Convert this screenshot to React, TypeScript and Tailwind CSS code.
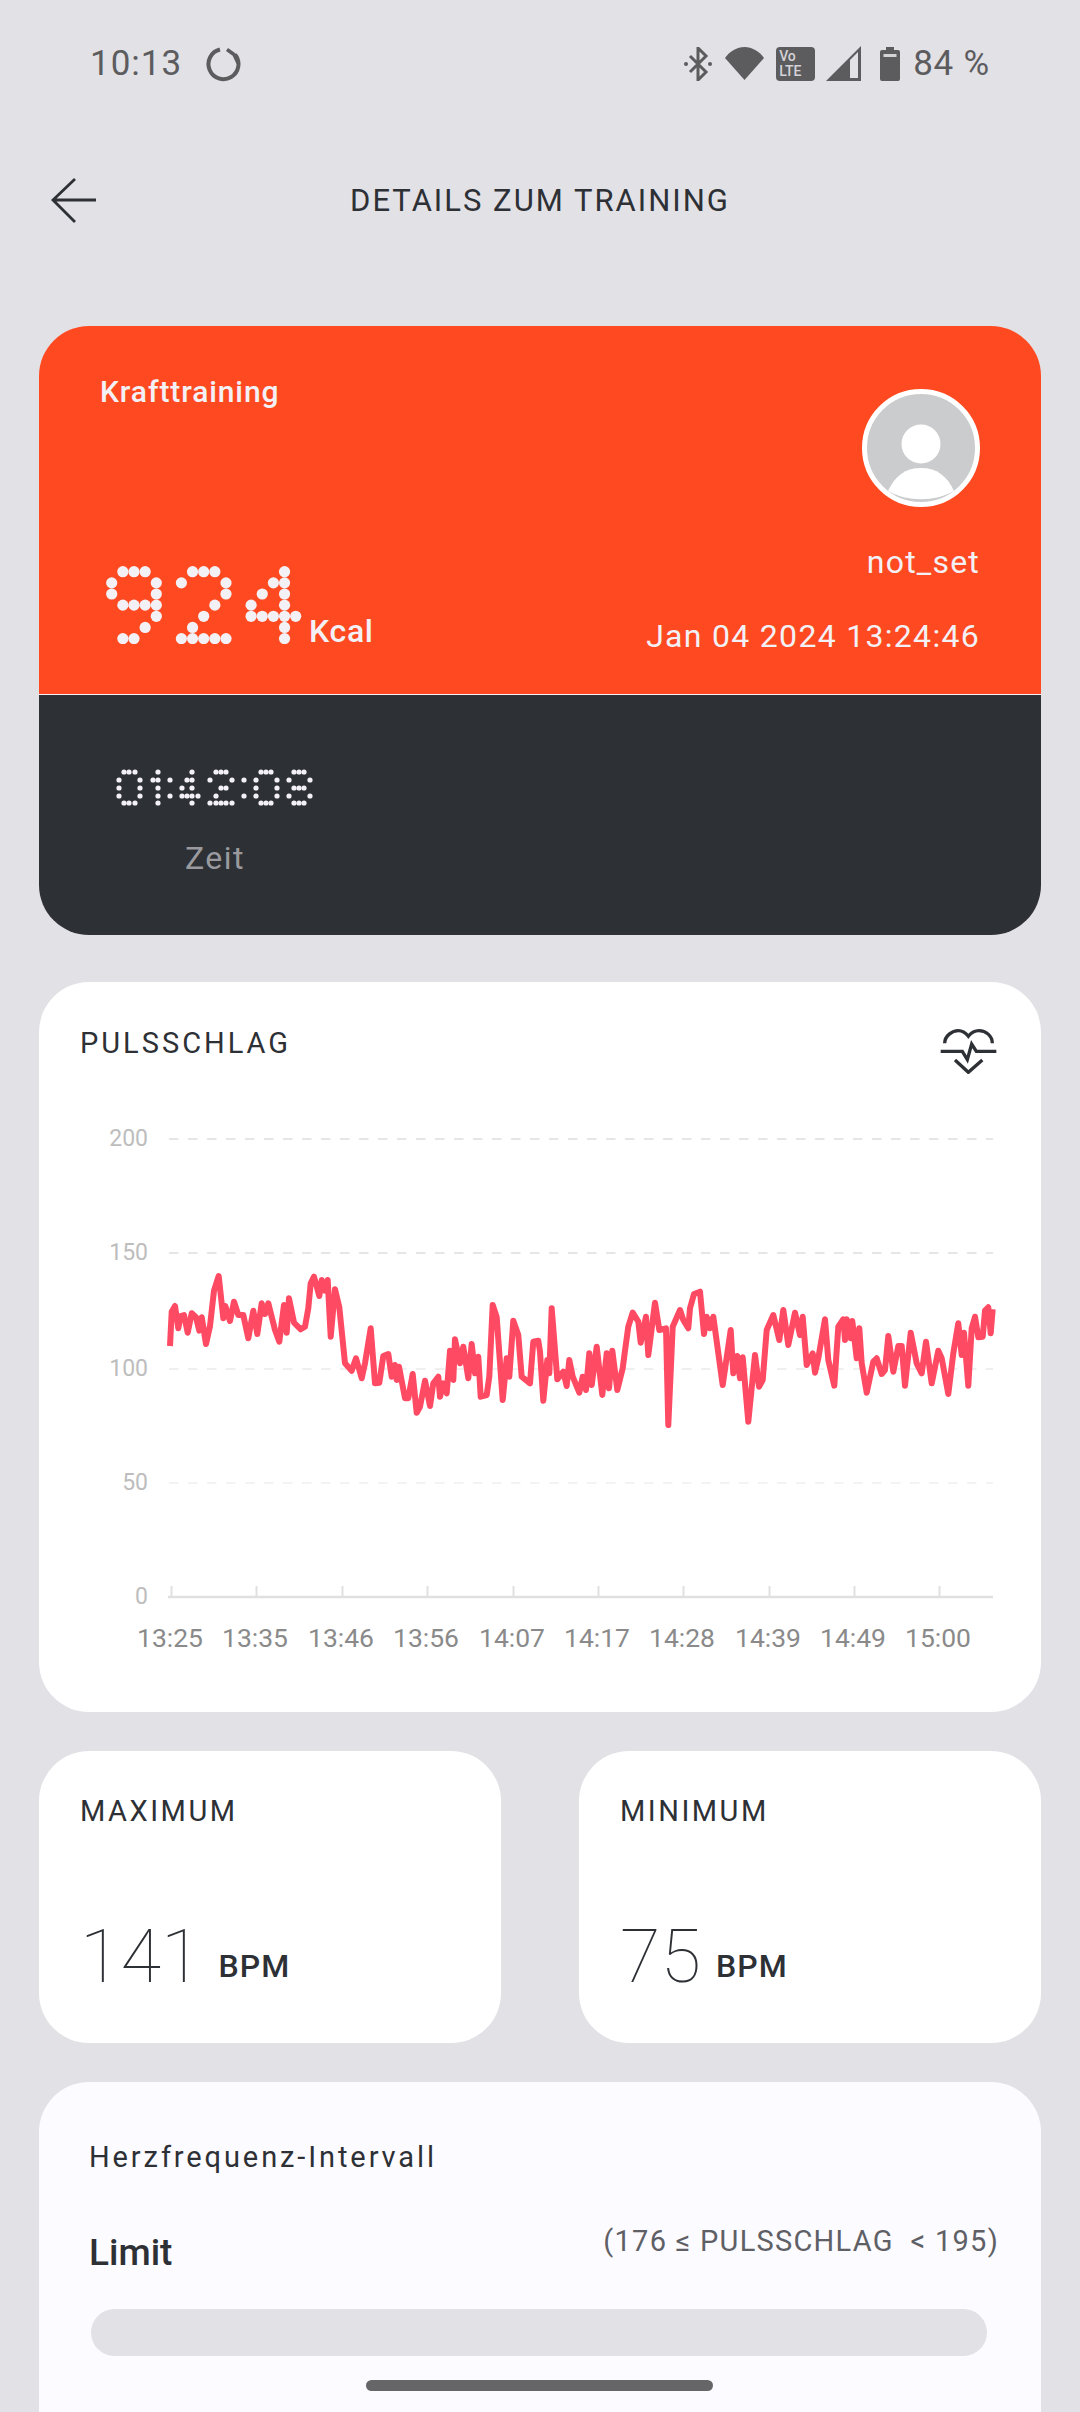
const DIGITS_924: Record<string, string[]> = {
  '9': ['.###.', '#...#', '#...#', '.####', '....#', '...#.', '.##..'],
  '2': ['.###.', '#...#', '....#', '...#.', '..#..', '.#...', '#####'],
  '4': ['...#.', '..##.', '.#.#.', '#..#.', '#####', '...#.', '...#.'],
};

// dots of 01:42:08, traced from the picture, in px from the left of the row
const TIME_DOTS: [number, number][] = [
  [5, 0], [10, 0], [16, 0], [0, 8], [21, 8], [0, 16], [21, 16], [0, 24], [21, 24], [5, 31], [10, 31], [16, 31],
  [39, 0], [34, 8], [39, 8], [39, 16], [39, 24], [39, 31],
  [51, 8], [51, 24],
  [73, 0], [68, 8], [73, 8], [63, 16], [73, 16], [63, 24], [68, 24], [73, 24], [79, 24], [73, 31],
  [97, 0], [102, 0], [107, 0], [91, 8], [113, 8], [102, 16], [107, 16], [97, 24], [91, 31], [97, 31], [102, 31], [107, 31], [113, 31],
  [125, 8], [125, 24],
  [142, 0], [147, 0], [152, 0], [137, 8], [158, 8], [137, 16], [158, 16], [137, 24], [158, 24], [142, 31], [147, 31], [152, 31],
  [175, 0], [180, 0], [185, 0], [170, 8], [191, 8], [175, 16], [180, 16], [185, 16], [170, 24], [191, 24], [175, 31], [180, 31], [185, 31],
];

const TRACE_LEFT = [
  240,378, 245,275, 255,258, 265,325, 272,288, 282,285, 293,338, 305,280, 318,292, 328,332, 335,292, 348,372, 360,318, 372,212, 386,168,
  400,295, 406,258, 420,303, 432,245, 445,285, 460,285, 475,355, 490,272, 502,342, 515,250, 525,282, 535,250, 555,330, 568,365, 582,255,
  590,338, 597,235, 612,308, 632,328, 645,320, 655,265, 662,190, 672,170, 688,228, 695,180, 705,212, 713,180, 722,350, 735,208, 748,262,
  765,430, 785,452, 798,415, 815,475, 825,430, 842,325, 855,490, 868,488, 880,408, 895,402, 905,470, 915,435, 920,480, 927,440, 945,535,
  955,535, 968,462, 980,578, 990,560, 1005,482, 1020,558, 1030,490, 1045,470, 1050,530, 1060,490, 1070,520, 1080,392, 1090,480, 1095,358,
  1110,430, 1120,380, 1135,475, 1145,372, 1155,460, 1165,410, 1172,530, 1190,525, 1198,470, 1208,255, 1220,292, 1238,540, 1250,415,
  1258,470, 1270,302, 1285,345, 1295,470, 1320,490, 1330,365, 1345,362,
];

const TRACE_RIGHT = [
  0,395, 10,542, 22,420, 28,460, 35,265, 52,478, 70,455, 80,498, 88,420, 98,470, 118,518, 128,470, 138,510, 148,400, 155,495, 170,380,
  187,525, 200,400, 207,505, 217,392, 232,510, 248,445, 255,392, 265,320, 278,278, 295,305, 302,368, 318,290, 325,405, 345,248, 358,330,
  378,325, 385,615, 398,320, 420,270, 430,300, 445,325, 450,265, 462,222, 480,215, 492,342, 500,290, 510,325, 520,290, 548,495, 572,330,
  580,460, 592,408, 600,475, 608,412, 625,605, 645,405, 657,500, 668,480, 680,330, 700,285, 718,360, 730,270, 745,375, 765,278, 780,345,
  788,290, 800,435, 818,400, 825,458, 835,415, 855,298, 865,420, 883,497, 895,320, 910,298, 915,360, 920,298, 932,355, 937,303, 950,415,
  958,325, 965,430, 980,518, 1000,425, 1010,415, 1025,462, 1035,450, 1045,348, 1060,455, 1075,378, 1085,378, 1095,497, 1112,338, 1130,430,
  1145,460, 1158,365, 1175,490, 1195,392, 1205,415, 1225,522, 1240,400, 1255,310, 1265,405, 1272,338, 1285,497, 1295,325, 1305,290,
  1315,352, 1328,350, 1335,272, 1345,262, 1352,340, 1358,268,
];

function tracePoints(values: number[], left: number) {
  const out: string[] = [];
  for (let i = 0; i < values.length; i += 2) {
    out.push(`${(values[i] / 3 + left).toFixed(1)},${(values[i + 1] / 3 + 1220).toFixed(1)}`);
  }
  return out.join(' ');
}

const PULSE_LINE = `${tracePoints(TRACE_LEFT, 90)} ${tracePoints(TRACE_RIGHT, 540)}`;

const GRID = [
  { label: '200', y: 1139, color: '#e6e6e6' },
  { label: '150', y: 1253, color: '#e6e6e6' },
  { label: '100', y: 1369, color: '#efefef' },
  { label: '50', y: 1483, color: '#f3f3f3' },
];

const TIMES = [
  ['13:25', 170], ['13:35', 255], ['13:46', 341], ['13:56', 426], ['14:07', 512],
  ['14:17', 597], ['14:28', 682], ['14:39', 768], ['14:49', 853], ['15:00', 938],
] as const;

function Calories() {
  const pitch = 11.15;
  const starts = [0, 69.7, 139.4];
  return (
    <svg width="196" height="78" className="block" role="img" aria-label="924">
      {['9', '2', '4'].map((digit, d) =>
        DIGITS_924[digit].map((row, r) =>
          row.split('').map((cell, c) =>
            cell === '#' ? (
              <circle key={`${d}-${r}-${c}`} cx={starts[d] + 5.7 + c * pitch} cy={5.7 + r * pitch} r="5.6" fill="#f3f1f6" />
            ) : null,
          ),
        ),
      )}
    </svg>
  );
}

function Duration() {
  return (
    <svg width="200" height="39" className="block" role="img" aria-label="01:42:08">
      {TIME_DOTS.map(([x, y]) => (
        <circle key={`${x}-${y}`} cx={x + 4} cy={y + 4} r="2.6" fill="#f3f1f6" />
      ))}
    </svg>
  );
}

function StatusIcons() {
  return (
    <div className="flex items-center text-[#5c5c5f]">
      <svg width="28" height="34" viewBox="0 0 28 34" fill="none" stroke="currentColor" strokeWidth="3">
        <path d="M6 9l16 16-8 8V1l8 8L6 25" />
        <circle cx="2" cy="17" r="2" fill="currentColor" stroke="none" />
        <circle cx="26" cy="17" r="2" fill="currentColor" stroke="none" />
      </svg>
      <svg width="39" height="33" viewBox="0 0 39 33" className="ml-[13px]">
        <path d="M0 11C5 4 12 0 19.5 0S34 4 39 11L19.5 33z" fill="currentColor" />
      </svg>
      <div className="ml-[12px] flex h-[34px] w-[39px] flex-col justify-center rounded-[4px] bg-[#5c5c5f] pl-[3px] text-[14px] leading-[15px] font-medium text-[#d4d3d8]">
        <span>Vo</span>
        <span>LTE</span>
      </div>
      <svg width="35" height="35" viewBox="0 0 35 35" className="ml-[11px]">
        <path d="M35 0V35H0zM32 6L24 14V32H32z" fill="currentColor" fillRule="evenodd" />
      </svg>
      <svg width="20" height="34" viewBox="0 0 20 34" className="ml-[19px]">
        <path d="M6 0h8v3h4a2 2 0 012 2v27a2 2 0 01-2 2H2a2 2 0 01-2-2V5a2 2 0 012-2h4z" fill="currentColor" />
        <rect x="3.5" y="7" width="13" height="3" fill="#d4d3d8" />
      </svg>
      <span className="ml-[13px] text-[35px] leading-[35px] tracking-[0.8px]">84 %</span>
    </div>
  );
}

function StatCard({ title, value, gap }: { title: string; value: string; gap: string }) {
  return (
    <div className="flex h-[292px] w-[462px] flex-col justify-between rounded-[50px] bg-white pt-[43px] pb-[49px] pl-[41px]">
      <div className="text-[29px] leading-[34px] tracking-[2.5px] text-[#2d3035]">{title}</div>
      <div className="flex items-end">
        <span className="text-[74px] leading-[74px] font-thin text-[#2d3035]">{value}</span>
        <span className={`${gap} mb-[11px] text-[32px] leading-[34px] font-medium tracking-[1px] text-[#2d3035]`}>BPM</span>
      </div>
    </div>
  );
}

export default function App() {
  return (
    <div className="relative h-[2412px] w-[1080px] overflow-hidden bg-[#e2e1e6] font-['Roboto',sans-serif]">
      {/* status bar */}
      <div className="mt-[46px] flex h-[35px] items-center justify-between pr-[90px] pl-[90px]">
        <div className="flex items-center text-[#5c5c5f]">
          <span className="text-[35px] leading-[35px] tracking-[1px]">10:13</span>
          <svg width="36" height="36" viewBox="0 0 36 36" fill="none" stroke="currentColor" strokeWidth="4" className="ml-[24px]">
            <path d="M14 3.5A15 15 0 1 0 29 8.5" />
            <path d="M21 3.5L28 8.5L32 17" strokeWidth="3.5" />
          </svg>
        </div>
        <StatusIcons />
      </div>

      {/* nav */}
      <div className="mt-[96px] grid h-[44px] grid-cols-[1fr_auto_1fr] items-center px-[51px]">
        <svg width="46" height="46" viewBox="0 0 46 46" fill="none" stroke="#2d3035" strokeWidth="2.8">
          <path d="M45 23H2M24 2L2 23L24 45" />
        </svg>
        <div className="pt-[2px] text-[31px] leading-[36px] tracking-[2px] text-[#2d3035]">DETAILS ZUM TRAINING</div>
        <div />
      </div>

      <div className="mt-[105px] flex flex-col px-[39px]">
        {/* summary */}
        <div className="overflow-hidden rounded-[50px]">
          <div className="flex h-[368px] justify-between bg-[#ff4a21] pr-[61px] pl-[61px] text-[#f3f1f6]">
            <div className="flex flex-col pt-[49px] pb-[50px]">
              <div className="text-[30px] leading-[34px] font-medium tracking-[0.9px]">Krafttraining</div>
              <div className="mt-auto ml-[6px] flex items-end">
                <Calories />
                <span className="ml-[7px] -mb-[2px] text-[32px] leading-[30px] font-medium tracking-[0.7px]">Kcal</span>
              </div>
            </div>
            <div className="flex flex-col items-end pt-[63px]">
              <div className="flex h-[118px] w-[118px] items-center justify-center overflow-hidden rounded-full border-[5px] border-white bg-[#cbcccd]">
                <svg width="108" height="108" viewBox="0 0 108 108">
                  <circle cx="54" cy="50" r="19.5" fill="#fff" />
                  <path d="M21 97C28 82 38 74 54 74S80 82 87 97C68 108 40 108 21 97z" fill="#fff" />
                </svg>
              </div>
              <div className="mt-[37px] text-[32px] leading-[36px] tracking-[1.2px]">not_set</div>
              <div className="mt-[38px] text-[32px] leading-[36px] tracking-[1.3px]">Jan 04 2024 13:24:46</div>
            </div>
          </div>
          <div className="h-[1px] bg-[#f3f1f6]" />
          <div className="flex h-[240px] flex-col items-center bg-[#2d3035] pt-[73px] pr-[726px] pl-[76px]">
            <Duration />
            <div className="mt-[33px] text-[32px] leading-[36px] tracking-[1.5px] text-[#9a9a9e]">Zeit</div>
          </div>
        </div>

        {/* pulse chart */}
        <div className="mt-[47px] h-[730px] rounded-[50px] bg-white pt-[47px]">
          <div className="flex h-[46px] items-start justify-between pr-[42px] pl-[41px]">
            <div className="-mt-[3px] text-[29px] leading-[34px] tracking-[3px] text-[#2d3035]">PULSSCHLAG</div>
            <svg width="60" height="45" viewBox="120 90 180 135" fill="none" stroke="#2d3035" strokeWidth="10">
              <path d="M137 133C137 110 160 95 178 95C190 95 200 102 208 112C216 102 226 95 240 95C260 95 280 110 280 133" />
              <path d="M125 157H190L205 182L218 135L232 157H292" />
              <path d="M168 183L208 220L250 183" />
            </svg>
          </div>
          <svg width="1002" height="550" viewBox="39 1110 1002 550" className="mt-[35px] block font-['Roboto',sans-serif]">
            {GRID.map((g) => (
              <g key={g.label}>
                <line x1="169" x2="993" y1={g.y} y2={g.y} stroke={g.color} strokeWidth="2" strokeDasharray="9.5 9.5" />
                <text x="148" y={g.y + 7} textAnchor="end" fontSize="23" fill="#bdbdbd">{g.label}</text>
              </g>
            ))}
            <text x="148" y="1604" textAnchor="end" fontSize="23" fill="#bdbdbd">0</text>
            <line x1="168" x2="993" y1="1597" y2="1597" stroke="#e0e0e0" strokeWidth="2.5" />
            {TIMES.map(([t, x]) => (
              <g key={t}>
                <line x1={x + 1.5} x2={x + 1.5} y1="1586" y2="1597" stroke="#e0e0e0" strokeWidth="2" />
                <text x={x} y="1647" textAnchor="middle" fontSize="26.5" fill="#8a8a8a">{t}</text>
              </g>
            ))}
            <polyline points={PULSE_LINE} fill="none" stroke="#ff4a63" strokeWidth="6" strokeLinejoin="round" />
          </svg>
        </div>

        {/* max and min */}
        <div className="mt-[39px] flex justify-between">
          <StatCard title="MAXIMUM" value="141" gap="ml-[17px]" />
          <StatCard title="MINIMUM" value="75" gap="ml-[15px]" />
        </div>

        {/* heart rate zones */}
        <div className="mt-[39px] h-[400px] rounded-[50px] bg-[#fcfbff] pt-[58px] pr-[42px] pl-[50px]">
          <div className="text-[29px] leading-[34px] tracking-[2.9px] text-[#2d3035]">Herzfrequenz-Intervall</div>
          <div className="mt-[50px] flex items-start justify-between">
            <div className="pt-[6px] text-[37px] leading-[46px] font-medium text-[#2d3035]">Limit</div>
            <div className="text-[29px] leading-[34px] tracking-[1.25px] whitespace-pre text-[#5f6065]">(176 ≤ PULSSCHLAG  &lt; 195)</div>
          </div>
          <div className="mt-[33px] mr-[12px] ml-[2px] h-[47px] rounded-full bg-[#e2e1e6]" />
        </div>
      </div>

      {/* home indicator */}
      <div className="absolute top-[2380px] left-[366px] h-[11px] w-[347px] rounded-full bg-[#666668]" />
    </div>
  );
}
